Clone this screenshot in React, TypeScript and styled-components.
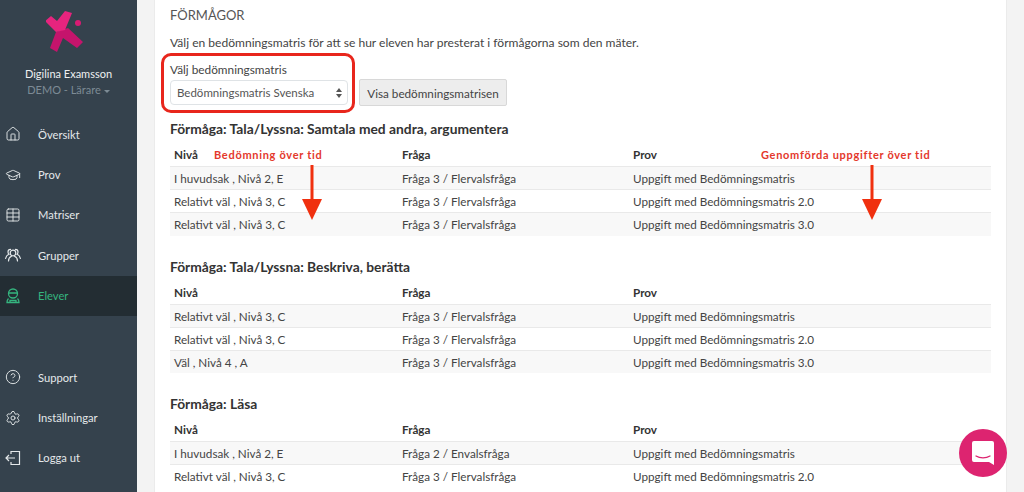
import React from "react";
import styled, { createGlobalStyle } from "styled-components";
import { Home, GraduationCap, Table as TableIcon, CircleHelp, Settings } from "lucide-react";

const GlobalStyle = createGlobalStyle`
  html, body {
    margin: 0;
    height: 492px;
    overflow: hidden;
    background: #f3f3f3;
    font-family: "Lato", "Liberation Sans", sans-serif;
  }
`;

const Layout = styled.div`
  display: flex;
  height: 492px;
  overflow: hidden;
  position: relative;
`;

const Sidebar = styled.aside`
  width: 137px;
  flex: none;
  background: #35424d;
  color: #e4e8ea;
  display: flex;
  flex-direction: column;
  padding-top: 8px;
  box-sizing: border-box;
`;

const Logo = styled.svg`
  display: block;
  flex: none;
  width: 46px;
  height: 46px;
  margin: 0 auto 12px;
`;

const UserName = styled.div`
  text-align: center;
  font-size: 11px;
  line-height: 16px;
  color: #eef0f1;
`;

const UserRole = styled.div`
  text-align: center;
  font-size: 11px;
  line-height: 16px;
  color: #7d8b95;
  margin-bottom: 16px;
`;

const Caret = styled.span`
  display: inline-block;
  margin-left: 3px;
  vertical-align: middle;
  border-left: 3px solid transparent;
  border-right: 3px solid transparent;
  border-top: 3px solid #7d8b95;
`;

const Nav = styled.nav`
  display: flex;
  flex-direction: column;
  flex: none;
  & + & {
    margin-top: 41px;
  }
`;

const NavItem = styled.a<{ $active?: boolean }>`
  display: flex;
  align-items: center;
  height: 40.4px;
  padding-left: 5px;
  gap: 17px;
  font-size: 11.2px;
  color: ${(p) => (p.$active ? "#35b57f" : "#e4e8ea")};
  background: ${(p) => (p.$active ? "#232d33" : "transparent")};
  svg {
    width: 16px;
    height: 16px;
    flex: none;
  }
`;

const Main = styled.main`
  flex: 1;
  margin: 0 17px;
  background: #fff;
  padding: 6px 15px 0;
  min-width: 0;
  border-left: 1px solid #ebebeb;
  border-right: 1px solid #ebebeb;
  color: #444;
  font-size: 12px;
`;

const Title = styled.h2`
  margin: 0 0 10px;
  font-size: 13px;
  line-height: 18px;
  font-weight: 400;
  color: #555;
`;

const Intro = styled.p`
  margin: 0 0 10px;
  line-height: 18px;
  font-size: 12.05px;
`;

const PickerBlock = styled.div`
  position: relative;
  margin-bottom: 13px;
`;

const PickerLabel = styled.label`
  display: block;
  line-height: 16px;
  margin-bottom: 2px;
  font-size: 11.8px;
`;

const PickerRow = styled.div`
  display: flex;
  gap: 11px;
`;

const SelectBox = styled.div`
  width: 178px;
  height: 25px;
  box-sizing: border-box;
  border: 1px solid #dfe3e6;
  border-radius: 4px;
  background: #fff;
  display: flex;
  align-items: center;
  justify-content: space-between;
  padding: 0 5px 0 6px;
  color: #555;
  font-size: 11.5px;
`;

const Spinner = styled.svg`
  width: 6px;
  height: 10px;
`;

const GrayButton = styled.button`
  height: 27px;
  margin-top: -1px;
  width: 148px;
  border: 1px solid #d8d8d8;
  border-radius: 2px;
  background: #ededed;
  color: #444;
  font: inherit;
  font-size: 11.7px;
  padding: 0;
`;

const RedFrame = styled.div`
  position: absolute;
  left: -9px;
  top: -9px;
  width: 194px;
  height: 60px;
  box-sizing: border-box;
  border: 3px solid #e8261c;
  border-radius: 10px;
  pointer-events: none;
`;

const SectionTitle = styled.h3`
  margin: 0 0 3.5px;
  font-size: 13.8px;
  line-height: 20px;
  font-weight: 700;
  color: #333;
`;

const Section = styled.section`
  position: relative;
  margin-bottom: 21px;
`;

const Table = styled.table`
  width: 100%;
  table-layout: fixed;
  border-collapse: collapse;
  font-size: 11.7px;
  th, td {
    text-align: left;
    padding: 0 4px;
    height: 23px;
    box-sizing: border-box;
    border-top: 1px solid #e9e9e9;
  }
  th {
    border-top: none;
    font-weight: 700;
    color: #333;
    height: 24px;
  }
  th:nth-child(1) {
    width: 228px;
  }
  th:nth-child(2) {
    width: 231px;
  }
  tbody tr:nth-child(odd) td {
    background: #f8f8f8;
  }
`;

const Note = styled.span<{ $left: number }>`
  position: absolute;
  left: ${(p) => p.$left}px;
  top: 28px;
  line-height: 16px;
  font-size: 11px;
  letter-spacing: 0.7px;
  font-weight: 700;
  color: #e4382c;
  white-space: nowrap;
`;

const Arrow = styled.svg<{ $left: number }>`
  position: absolute;
  left: ${(p) => p.$left}px;
  top: 46px;
  width: 20px;
  height: 55px;
`;

const ChatBubble = styled.div`
  position: absolute;
  left: 959px;
  top: 429px;
  width: 48px;
  height: 48px;
  border-radius: 50%;
  background: #dd2470;
  display: flex;
  align-items: center;
  justify-content: center;
`;

const ChatIcon = styled.svg`
  width: 24px;
  height: 26px;
`;

type Row = [string, string, string];

type SkillGroup = {
  title: string;
  rows: Row[];
  annotated?: boolean;
};

const groups: SkillGroup[] = [
  {
    title: "Förmåga: Tala/Lyssna: Samtala med andra, argumentera",
    annotated: true,
    rows: [
      ["I huvudsak , Nivå 2, E", "Fråga 3 / Flervalsfråga", "Uppgift med Bedömningsmatris"],
      ["Relativt väl , Nivå 3, C", "Fråga 3 / Flervalsfråga", "Uppgift med Bedömningsmatris 2.0"],
      ["Relativt väl , Nivå 3, C", "Fråga 3 / Flervalsfråga", "Uppgift med Bedömningsmatris 3.0"],
    ],
  },
  {
    title: "Förmåga: Tala/Lyssna: Beskriva, berätta",
    rows: [
      ["Relativt väl , Nivå 3, C", "Fråga 3 / Flervalsfråga", "Uppgift med Bedömningsmatris"],
      ["Relativt väl , Nivå 3, C", "Fråga 3 / Flervalsfråga", "Uppgift med Bedömningsmatris 2.0"],
      ["Väl , Nivå 4 , A", "Fråga 3 / Flervalsfråga", "Uppgift med Bedömningsmatris 3.0"],
    ],
  },
  {
    title: "Förmåga: Läsa",
    rows: [
      ["I huvudsak , Nivå 2, E", "Fråga 2 / Envalsfråga", "Uppgift med Bedömningsmatris"],
      ["Relativt väl , Nivå 3, C", "Fråga 3 / Flervalsfråga", "Uppgift med Bedömningsmatris 2.0"],
    ],
  },
];

const DownArrow = ({ left }: { left: number }) => (
  <Arrow $left={left} viewBox="0 0 20 55">
    <rect x="8.5" y="0" width="3" height="36" fill="#f0300f" />
    <polygon points="0,34 20,34 10,55" fill="#f0300f" />
  </Arrow>
);

// tre personer, finns inte i lucide
const GroupIcon = () => (
  <svg viewBox="0 0 16 16" fill="none" stroke="currentColor" strokeWidth="1.2" strokeLinecap="round">
    <circle cx="8" cy="6" r="2.8" />
    <path d="M3.500 14c0-2.500 1.500-4.200 3-4.800M12.500 14c0-2.500-1.500-4.200-3-4.800" />
    <path d="M5.500 2.400A2.600 2.600 0 0 0 3 5c0 1 .4 1.700 1 2.300C2 8 1 9.500.6 11.500" />
    <path d="M10.500 2.400A2.600 2.600 0 0 1 13 5c0 1-.4 1.700-1 2.300 2 .7 3 2.200 3.400 4.200" />
  </svg>
);

const StudentIcon = () => (
  <svg viewBox="0 0 16 16" fill="none" stroke="currentColor" strokeWidth="1.3">
    <circle cx="8" cy="5.500" r="4.500" />
    <path d="M3.500 5h9M3.500 10.500c-1 1-1.500 2.500-1.500 4h12c0-1.500-.5-3-1.500-4" />
    <path d="M5 14.500v-2h6v2" />
  </svg>
);

const LogoutIcon = () => (
  <svg viewBox="0 0 16 16" fill="none" stroke="currentColor" strokeWidth="1.2">
    <path d="M6 4V1.500h8.500v13H6V12" />
    <path d="M10 8H1M4 5 1 8l3 3" />
  </svg>
);

export default function App() {
  return (
    <Layout>
      <GlobalStyle />
      <Sidebar>
        <Logo viewBox="46 8 46 46">
          <polygon points="50,48 57,52 63,38 77,48 83,42 68,28 56,32" fill="#c5146c" />
          <polygon points="45,21 51,16 57,21 65,11 72,13 65,30 56,32" fill="#e6247e" />
          <circle cx="78" cy="23" r="3" fill="#d81b73" />
        </Logo>
        <UserName>Digilina Examsson</UserName>
        <UserRole>
          DEMO - Lärare
          <Caret />
        </UserRole>
        <Nav>
          <NavItem><Home strokeWidth={1.4} />Översikt</NavItem>
          <NavItem><GraduationCap strokeWidth={1.4} />Prov</NavItem>
          <NavItem><TableIcon strokeWidth={1.4} />Matriser</NavItem>
          <NavItem><GroupIcon />Grupper</NavItem>
          <NavItem $active><StudentIcon />Elever</NavItem>
        </Nav>
        <Nav>
          <NavItem><CircleHelp strokeWidth={1.4} />Support</NavItem>
          <NavItem><Settings strokeWidth={1.4} />Inställningar</NavItem>
          <NavItem><LogoutIcon />Logga ut</NavItem>
        </Nav>
      </Sidebar>
      <Main>
        <Title>FÖRMÅGOR</Title>
        <Intro>Välj en bedömningsmatris för att se hur eleven har presterat i förmågorna som den mäter.</Intro>
        <PickerBlock>
          <PickerLabel>Välj bedömningsmatris</PickerLabel>
          <PickerRow>
            <SelectBox>
              Bedömningsmatris Svenska
              <Spinner viewBox="0 0 6 10">
                <polygon points="3,0 6,4 0,4" fill="#555" />
                <polygon points="3,10 6,6 0,6" fill="#555" />
              </Spinner>
            </SelectBox>
            <GrayButton>Visa bedömningsmatrisen</GrayButton>
          </PickerRow>
          <RedFrame />
        </PickerBlock>
        {groups.map((group) => (
          <Section key={group.title}>
            <SectionTitle>{group.title}</SectionTitle>
            <Table>
              <thead>
                <tr>
                  <th>Nivå</th>
                  <th>Fråga</th>
                  <th>Prov</th>
                </tr>
              </thead>
              <tbody>
                {group.rows.map((row, i) => (
                  <tr key={i}>
                    {row.map((cell, j) => (
                      <td key={j}>{cell}</td>
                    ))}
                  </tr>
                ))}
              </tbody>
            </Table>
            {group.annotated && (
              <>
                <Note $left={44}>Bedömning över tid</Note>
                <Note $left={591}>Genomförda uppgifter över tid</Note>
                <DownArrow left={132} />
                <DownArrow left={692} />
              </>
            )}
          </Section>
        ))}
      </Main>
      <ChatBubble>
        <ChatIcon viewBox="0 0 24 26">
          <path d="M3 1h18a2 2 0 0 1 2 2v22l-5-3H3a2 2 0 0 1-2-2V3a2 2 0 0 1 2-2z" fill="#fff" />
          <path d="M5 16c4 2.500 10 2.500 14 0" fill="none" stroke="#dd2470" strokeWidth="1.300" strokeLinecap="round" />
        </ChatIcon>
      </ChatBubble>
    </Layout>
  );
}
